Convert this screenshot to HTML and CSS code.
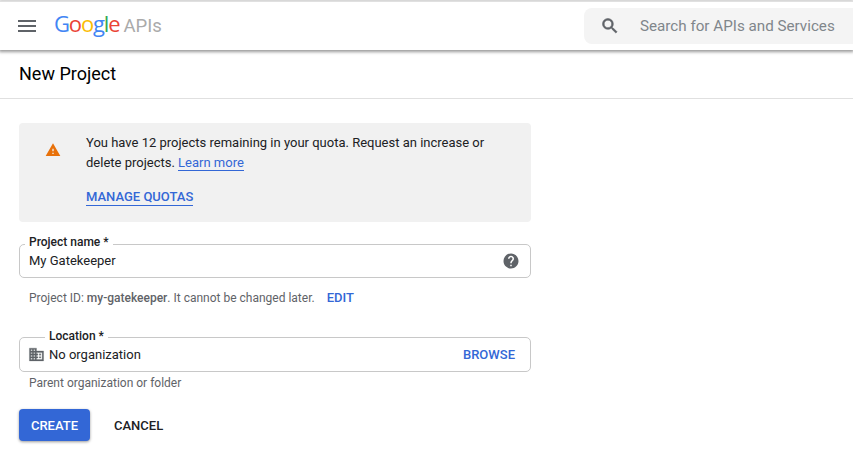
FILE: index.html
```html
<!DOCTYPE html>
<html lang="en">
<head>
<meta charset="utf-8">
<title>New Project</title>
<link rel="stylesheet" href="styles.css">
</head>
<body>
<header class="topbar">
  <svg class="menu-icon" width="24" height="24" viewBox="0 0 24 24"><path d="M3 18h18v-2H3v2zm0-5h18v-2H3v2zm0-7v2h18V6H3z"/></svg>
  <div class="logo"><span class="logo-word"><span class="g-blue">G</span><span class="g-red">o</span><span class="g-yellow">o</span><span class="g-blue">g</span><span class="g-green">l</span><span class="g-red">e</span></span><span class="logo-apis">APIs</span></div>
  <div class="search">
    <svg class="search-icon" width="20" height="20" viewBox="0 0 24 24"><path d="M15.5 14h-.79l-.28-.27A6.47 6.47 0 0 0 16 9.5 6.5 6.5 0 1 0 9.5 16c1.61 0 3.09-.59 4.23-1.57l.27.28v.79l5 4.99L20.49 19l-4.99-5zm-6 0C7.01 14 5 11.99 5 9.5S7.01 5 9.5 5 14 7.01 14 9.5 11.99 14 9.5 14z"/></svg>
    <span class="search-text">Search for APIs and Services</span>
  </div>
</header>
<div class="title-row"><h1 class="title">New Project</h1></div>
<main class="content">
  <section class="notice">
    <svg class="warn-icon" width="16" height="16" viewBox="0 0 24 24"><path d="M1 21h22L12 2 1 21zm12-3h-2v-2h2v2zm0-4h-2v-4h2v4z"/></svg>
    <div class="notice-body">
      <p class="notice-text">You have 12 projects remaining in your quota. Request an increase or delete projects. <a class="link" href="#">Learn more</a></p>
      <a class="link link-strong" href="#">MANAGE QUOTAS</a>
    </div>
  </section>
  <div class="field field-name">
    <span class="field-label">Project name *</span>
    <span class="field-value">My Gatekeeper</span>
    <svg class="help-icon" width="18" height="18" viewBox="0 0 24 24"><path d="M12 2C6.48 2 2 6.48 2 12s4.48 10 10 10 10-4.48 10-10S17.52 2 12 2zm1 17h-2v-2h2v2zm2.07-7.75l-.9.92C13.45 12.9 13 13.5 13 15h-2v-.5c0-1.1.45-2.1 1.17-2.83l1.24-1.26c.37-.36.59-.86.59-1.41 0-1.1-.9-2-2-2s-2 .9-2 2H8c0-2.21 1.79-4 4-4s4 1.79 4 4c0 .88-.36 1.68-.93 2.25z"/></svg>
  </div>
  <p class="hint hint-id">Project ID: <span class="hint-strong">my-gatekeeper</span>. It cannot be changed later. <a class="edit" href="#">EDIT</a></p>
  <div class="field field-location">
    <span class="field-label">Location *</span>
    <svg class="org-icon" width="17" height="17" viewBox="0 0 24 24"><path d="M12 7V3H2v18h20V7H12zM6 19H4v-2h2v2zm0-4H4v-2h2v2zm0-4H4V9h2v2zm0-4H4V5h2v2zm4 12H8v-2h2v2zm0-4H8v-2h2v2zm0-4H8V9h2v2zm0-4H8V5h2v2zm10 12h-8v-2h2v-2h-2v-2h2v-2h-2V9h8v10zm-2-8h-2v2h2v-2zm0 4h-2v2h2v-2z"/></svg>
    <span class="field-value">No organization</span>
    <a class="browse" href="#">BROWSE</a>
  </div>
  <p class="hint hint-parent">Parent organization or folder</p>
  <div class="actions">
    <button class="btn btn-primary" type="button">CREATE</button>
    <button class="btn btn-plain" type="button">CANCEL</button>
  </div>
</main>
</body>
</html>
```

FILE: styles.css
```css
* { box-sizing: border-box; }
html, body { margin: 0; padding: 0; }
body {
  width: 853px;
  height: 469px;
  overflow: hidden;
  background: #fff;
  color: #202124;
  font-family: Roboto, "Liberation Sans", sans-serif;
  font-size: 13px;
}
.topbar {
  position: relative;
  z-index: 2;
  display: flex;
  align-items: center;
  height: 49px;
  margin-top: 1px;
  border-top: 1px solid #e0e0e0;
  background: #fff;
  padding-left: 15px;
  box-shadow: 0 1px 3px 1px rgba(0,0,0,.4);
}
.menu-icon { fill: #5f6368; flex: none; }
.logo { display: flex; align-items: baseline; margin-left: 15px; margin-top: -6px; }
.logo-word { font-family: "Open Sans", sans-serif; font-size: 22px; letter-spacing: -1.15px; }
.logo-apis { font-size: 18.5px; color: #aaaaaa; margin-left: 4px; }
.g-blue { color: #4285f4; }
.g-red { color: #ea4335; }
.g-yellow { color: #fbbc05; }
.g-green { color: #34a853; }
.search {
  display: flex;
  align-items: center;
  width: 269px;
  height: 36px;
  margin-left: auto;
  margin-top: -1px;
  padding-left: 16px;
  background: #f4f4f4;
  border-radius: 8px 0 0 8px;
}
.search-icon { fill: #5f6368; stroke: #5f6368; stroke-width: .7; flex: none; }
.search-text { margin-left: 20px; font-size: 15.2px; color: #80868b; white-space: nowrap; }
.title-row {
  height: 49px;
  border-bottom: 1px solid #e0e0e0;
  padding-left: 19px;
  display: flex;
  align-items: center;
}
.title { margin: -1px 0 0; font-size: 18px; font-weight: 400; color: #000; }
.content { width: 531px; padding: 24px 0 0 19px; }
.notice {
  display: flex;
  height: 99px;
  background: #f1f1f1;
  border-radius: 4px;
  padding: 10px 0 0 26px;
}
.warn-icon { fill: #e8710a; flex: none; margin-top: 9px; }
.notice-body { margin-left: 25px; width: 410px; }
.notice-text { margin: 0; line-height: 20px; color: #202124; }
.link { color: #3367d6; text-decoration: none; border-bottom: 1px solid #3367d6; }
.link-strong { display: inline-block; margin-top: 16px; line-height: 16px; font-weight: 500; font-size: 13px; }
.field {
  position: relative;
  display: flex;
  align-items: center;
  border: 1px solid #c8c8c8;
  border-radius: 5px;
}
.field-name { height: 34px; margin-top: 22px; padding: 0 10px 2px 9px; }
.field-name .help-icon { margin-top: 2px; }
.field-location { height: 35px; margin-top: 32px; padding: 0 15px 0 9px; }
.field-label {
  position: absolute;
  top: -10px;
  left: 5px;
  padding: 0 4px;
  background: #fff;
  font-size: 12px;
  font-weight: 500;
  line-height: 14px;
  color: #202124;
}
.field-location .field-label { top: -9px; left: 25px; }
.field-value { flex: 1; font-size: 13px; color: #202124; }
.help-icon { fill: #5f6368; flex: none; }
.org-icon { fill: #5f6368; stroke: #5f6368; stroke-width: .4; flex: none; margin: 0 4px 0 -1px; }
.browse, .edit { color: #3367d6; text-decoration: none; font-weight: 500; font-size: 13px; }
.hint { margin: 0; font-size: 12px; color: #5f6368; line-height: 14px; }
.hint-id { margin-top: 13px; padding-left: 10px; }
.hint-strong { font-weight: 500; }
.edit { margin-left: 9px; }
.hint-parent { margin-top: 4px; padding-left: 10px; }
.actions { display: flex; align-items: center; margin-top: 19px; }
.btn {
  height: 32px;
  border: 0;
  border-radius: 4px;
  font-family: inherit;
  font-size: 13px;
  font-weight: 500;
  padding: 0;
}
.btn-primary {
  width: 71px;
  background: #3367d6;
  color: #fff;
  box-shadow: 0 1px 3px rgba(0,0,0,.4);
}
.btn-plain { width: 49px; margin-left: 24px; background: transparent; color: #202124; }
```
